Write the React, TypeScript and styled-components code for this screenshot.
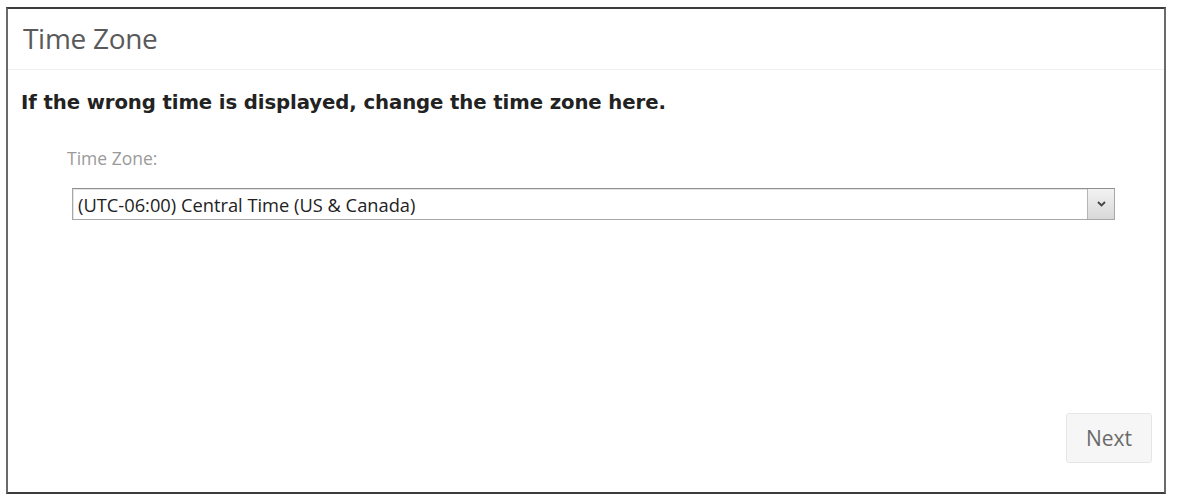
import styled, { createGlobalStyle } from "styled-components";

const GlobalStyle = createGlobalStyle`
  html, body {
    margin: 0;
    padding: 0;
    background: #ffffff;
  }
`

const Frame = styled.div`
  box-sizing: border-box;
  margin: 7px 0 0 6px;
  width: 1160px;
  height: 487px;
  border: 2px solid #6a6a6a;
  border-top-color: #3c3c3c;
  border-bottom-color: #3c3c3c;
  display: flex;
  flex-direction: column;
  background: #ffffff;
`

const Header = styled.div`
  height: 61px;
  box-sizing: border-box;
  padding-left: 15px;
  padding-bottom: 3px;
  display: flex;
  align-items: center;
  border-bottom: 1px solid #f0f0f0;
`

const Title = styled.h1`
  margin: 0;
  font-family: "Open Sans", sans-serif;
  font-weight: 400;
  font-size: 28px;
  letter-spacing: -0.3px;
  color: #5a5a5a;
`

const Body = styled.div`
  flex: 1;
  display: flex;
  flex-direction: column;
  padding: 21px 12px 29px 13px;
`

const Lead = styled.p`
  margin: 0;
  line-height: 24px;
  font-family: "DejaVu Sans", Verdana, sans-serif;
  font-weight: bold;
  font-size: 19.7px;
  letter-spacing: -0.1px;
  color: #222222;
`

const Field = styled.div`
  margin: 32px 0 0 51px;
  width: 1043px;
`

const Label = styled.label`
  display: block;
  line-height: 23px;
  font-family: "Open Sans", sans-serif;
  font-size: 17.5px;
  color: #9a9a9a;
  margin-left: -5px;
`

const SelectBox = styled.div`
  margin-top: 18px;
  display: flex;
  height: 32px;
  box-sizing: border-box;
  border: 1px solid #a8a8a8;
  border-top-color: #8f8f8f;
  background: #ffffff;
`

const Value = styled.div`
  flex: 1;
  display: flex;
  align-items: center;
  padding-left: 5px;
  font-family: "Open Sans", sans-serif;
  font-size: 18.3px;
  color: #222222;
  box-shadow: inset 1px 1px 0 #e4e4e4;
`

const Arrow = styled.div`
  width: 26px;
  display: flex;
  align-items: center;
  justify-content: center;
  border-left: 1px solid #b5b5b5;
  background: linear-gradient(#f2f2f2, #d8d8d8);
`

const Footer = styled.div`
  margin-top: auto;
  display: flex;
  justify-content: flex-end;
`

const Button = styled.button`
  width: 86px;
  height: 50px;
  border: 1px solid #e6e6e6;
  border-radius: 3px;
  background: #f6f6f6;
  font-family: "Open Sans", sans-serif;
  font-size: 21px;
  color: #6a6a6a;
  cursor: pointer;
`

const App = () => {
  return (
    <>
      <GlobalStyle />
      <Frame>
        <Header>
          <Title>Time Zone</Title>
        </Header>
        <Body>
          <Lead>If the wrong time is displayed, change the time zone here.</Lead>
          <Field>
            <Label>Time Zone:</Label>
            <SelectBox>
              <Value>(UTC-06:00) Central Time (US &amp; Canada)</Value>
              <Arrow>
                <svg width="9" height="6" viewBox="0 0 9 6">
                  <path d="M1 1 L4.5 4.5 L8 1" fill="none" stroke="#444" strokeWidth="1.8" />
                </svg>
              </Arrow>
            </SelectBox>
          </Field>
          <Footer>
            <Button>Next</Button>
          </Footer>
        </Body>
      </Frame>
    </>
  )
}

export default App;
